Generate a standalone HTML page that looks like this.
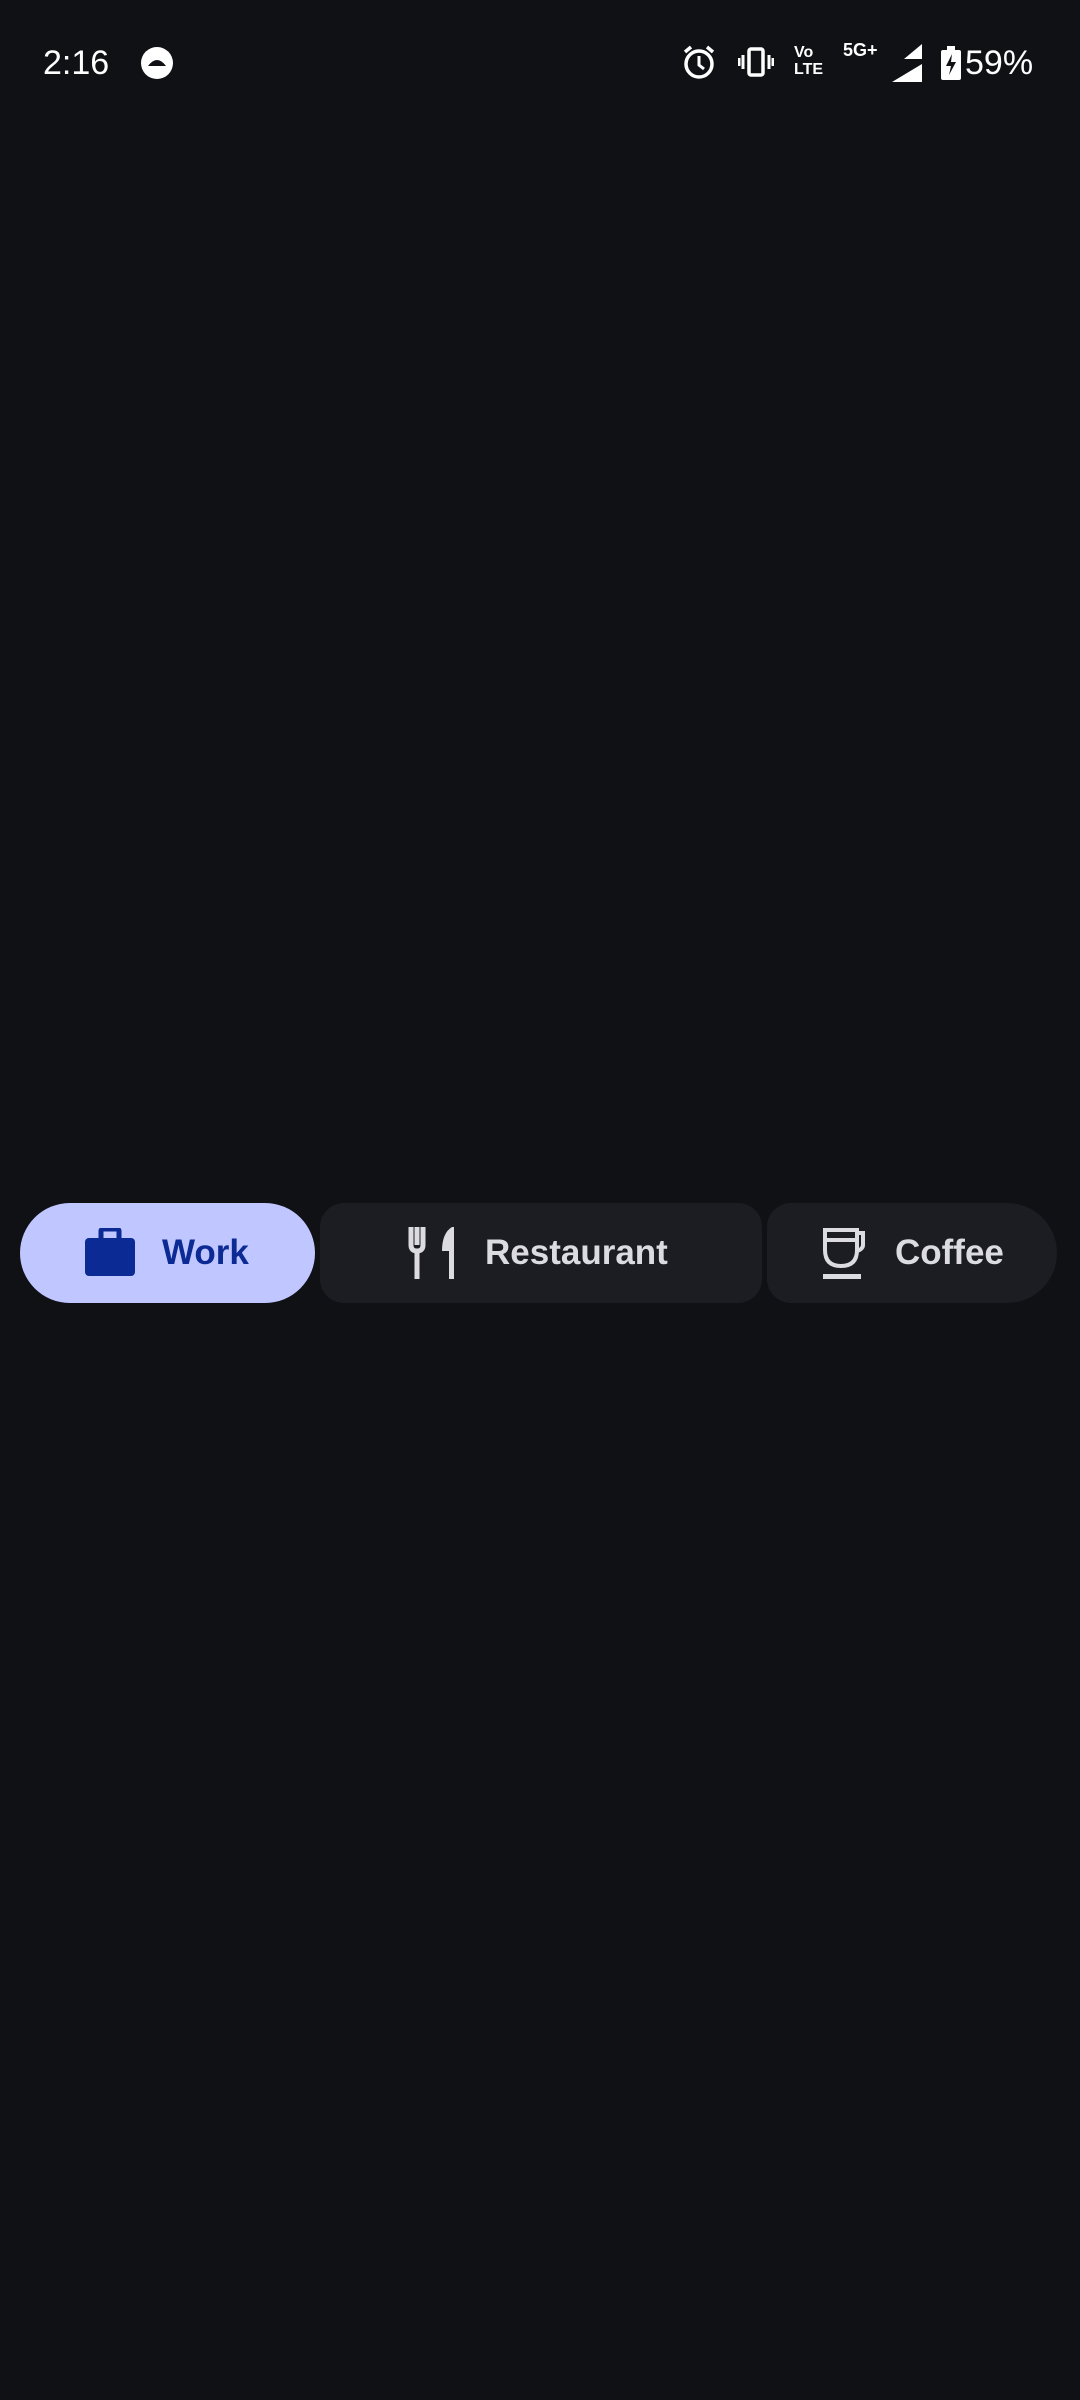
<!DOCTYPE html>
<html><head><meta charset="utf-8"><style>
html,body{margin:0;padding:0;background:#0f1115;width:1080px;height:2400px;overflow:hidden;font-family:"Liberation Sans",sans-serif}
.sb{position:absolute;top:0;left:0;width:1080px;height:120px;color:#fff}
.chip{position:absolute;top:1203px;height:100px;display:flex;align-items:center;font-weight:bold;font-size:35px}
.w{left:20px;width:295px;background:#c0c6ff;border-radius:50px;color:#0b2a94}
.r{left:320px;width:442px;background:#1c1d22;border-radius:24px;color:#dcdce0}
.c{left:767px;width:290px;background:#1c1d22;border-radius:24px 50px 50px 24px;color:#dcdce0}
svg{position:absolute}
span.t{position:absolute}
</style></head><body>
<div class="sb">
<span style="position:absolute;left:43px;top:44px;font-size:34px">2:16</span>
<svg style="left:140px;top:46px" width="34" height="34" viewBox="0 0 34 34"><circle cx="17" cy="17" r="16" fill="#fff"/><path d="M8 20 Q17 8 26 20 Z" fill="#0f1115"/></svg>
<svg style="left:682px;top:44px" width="34" height="36" viewBox="0 0 34 36"><circle cx="17" cy="20" r="13" fill="none" stroke="#fff" stroke-width="3.5"/><path d="M17 12v9l5 4" stroke="#fff" stroke-width="3" fill="none"/><path d="M3 8l6-5M31 8l-6-5" stroke="#fff" stroke-width="3.5"/></svg>
<svg style="left:738px;top:46px" width="36" height="32" viewBox="0 0 36 32"><rect x="11" y="3" width="14" height="26" rx="2" fill="none" stroke="#fff" stroke-width="3.5"/><path d="M5 9v14M1 12v8M31 9v14M35 12v8" stroke="#fff" stroke-width="3"/></svg>
<span style="position:absolute;left:794px;top:44px;font-size:16px;font-weight:bold;line-height:17px">Vo<br>LTE</span>
<span style="position:absolute;left:843px;top:40px;font-size:18px;font-weight:bold">5G+</span>
<svg style="left:890px;top:44px" width="32" height="38" viewBox="0 0 32 38"><path d="M32 0V15H14Z M32 20V38H2Z" fill="#fff"/></svg>
<svg style="left:941px;top:46px" width="20" height="34" viewBox="0 0 20 34"><rect x="0" y="4" width="20" height="30" rx="2" fill="#fff"/><rect x="6" y="0" width="8" height="5" fill="#fff"/><path d="M11 8l-6 12h5l-2 9 7-13h-5z" fill="#0f1115"/></svg>
<span style="position:absolute;left:965px;top:44px;font-size:34px">59%</span>
</div>

<div class="chip w">
<svg style="left:65px;top:25px" width="50" height="48" viewBox="0 0 50 48"><rect x="0" y="10" width="50" height="38" rx="4" fill="#0b2a94"/><rect x="16" y="1" width="18" height="12" rx="2" fill="none" stroke="#0b2a94" stroke-width="5"/></svg>
<span class="t" style="left:142px">Work</span>
</div>
<div class="chip r">
<svg style="left:88px;top:24px" width="50" height="52" viewBox="0 0 50 52"><path d="M3 0v18q0 6 6 6v28M9 0v18M15 0v18q0 6-6 6" stroke="#dcdce0" stroke-width="5" fill="none"/><path d="M44 0q-10 6-10 24h7v28h5V0z" fill="#dcdce0"/></svg>
<span class="t" style="left:165px">Restaurant</span>
</div>
<div class="chip c">
<svg style="left:55px;top:24px" width="46" height="54" viewBox="0 0 46 54"><path d="M3 3h32v20q0 16-16 16T3 23z M3 13h32 M35 6h6v12q0 4-6 6" fill="none" stroke="#dcdce0" stroke-width="4"/><rect x="1" y="47" width="38" height="5" fill="#dcdce0"/></svg>
<span class="t" style="left:128px">Coffee</span>
</div>
</body></html>
